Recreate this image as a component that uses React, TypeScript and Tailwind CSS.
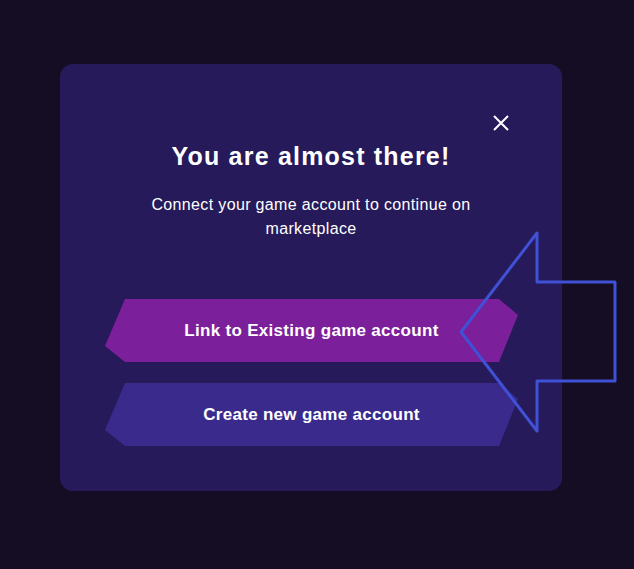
import React from 'react';

const shape =
  '[clip-path:polygon(20px_0,394px_0,413px_16px,394px_63px,20px_63px,0_47px)]';

function ChevronButton({ label, tone }: { label: string; tone: 'primary' | 'secondary' }) {
  return (
    <button
      className={`w-[413px] h-[63px] flex items-center justify-center text-[17px] font-bold tracking-[0.3px] text-white ${shape} ${
        tone === 'primary' ? 'bg-[#7c1f9b]' : 'bg-[#3a2a8b]'
      }`}
    >
      {label}
    </button>
  );
}

export default function App() {
  return (
    <div
      className="relative w-[634px] h-[569px] bg-[#140d24] pt-[64px] pl-[60px] overflow-hidden"
      style={{ fontFamily: '"Liberation Sans", Arial, sans-serif' }}
    >
      {/* Modal */}
      <div className="relative w-[502px] h-[427px] rounded-[13px] bg-[#261a5a] flex flex-col items-center pt-[77px]">
        <button className="absolute top-[51px] right-[53px] w-[16px] h-[16px] text-white">
          <svg viewBox="0 0 16 16" width="16" height="16" fill="none" stroke="currentColor" strokeWidth="2">
            <path d="M1 1L15 15M15 1L1 15" />
          </svg>
        </button>

        <h2 className="text-[25px] leading-[31px] font-bold text-white tracking-[1.2px]">
          You are almost there!
        </h2>
        <p className="mt-[21px] w-[360px] text-center text-[16px] leading-[24px] text-white tracking-[0.35px]">
          Connect your game account to continue on marketplace
        </p>

        <div className="mt-[58px] flex flex-col gap-[21px] pl-[1px]">
          <ChevronButton label="Link to Existing game account" tone="primary" />
          <ChevronButton label="Create new game account" tone="secondary" />
        </div>
      </div>

      {/* Pointer arrow annotation */}
      <svg
        className="absolute left-0 top-0 pointer-events-none"
        width="634"
        height="569"
        viewBox="0 0 634 569"
        fill="none"
      >
        <path
          d="M537 233 L537 282 L615 282 L615 381 L537 381 L537 431 L461 332 Z"
          stroke="#3f51d4"
          strokeWidth="3"
          strokeLinejoin="round"
        />
      </svg>
    </div>
  );
}
